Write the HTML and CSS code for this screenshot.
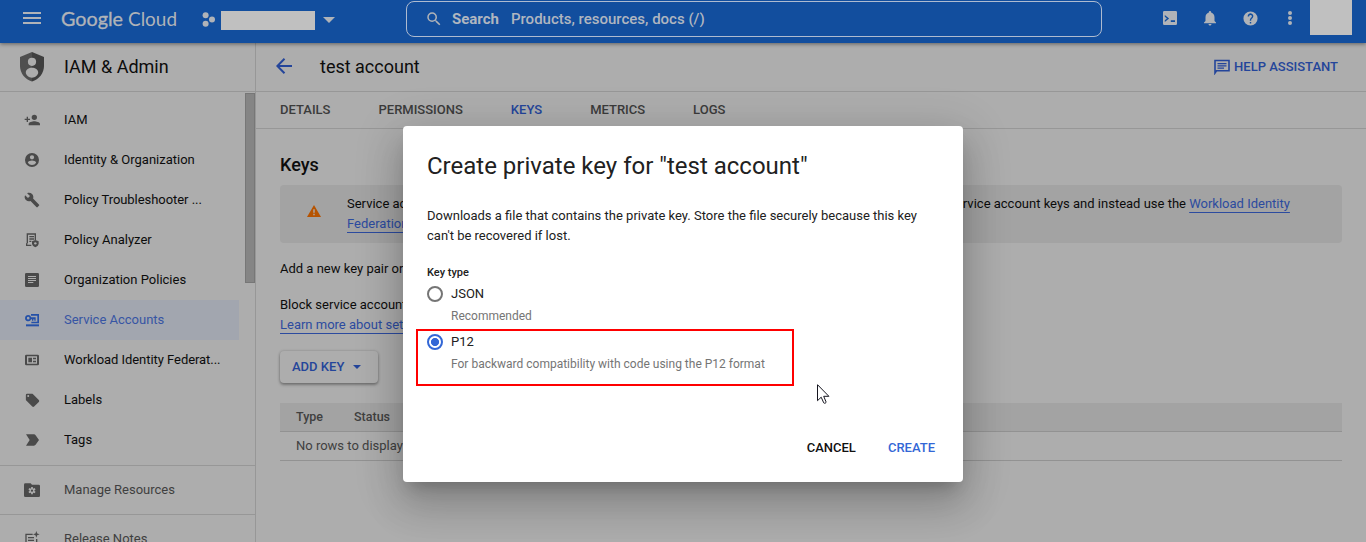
FILE: index.html
```html
<!DOCTYPE html>
<html lang="en">
<head>
<meta charset="utf-8">
<title>IAM &amp; Admin – Service Accounts</title>
<link rel="stylesheet" href="styles.css">
</head>
<body>
<header class="topbar">
  <svg class="menu" width="18" height="12" viewBox="0 0 18 12"><path d="M0 0h18v2H0zM0 5h18v2H0zM0 10h18v2H0z"/></svg>
  <svg class="logo" width="118" height="32" viewBox="0 0 118 32"><text x="0" y="21" textLength="62" lengthAdjust="spacingAndGlyphs" class="logo-google">Google</text><text x="67" y="21" textLength="49" lengthAdjust="spacingAndGlyphs">Cloud</text></svg>
  <svg class="project-icon" width="14" height="16" viewBox="0 0 14 16"><circle cx="3.6" cy="3.3" r="3"/><circle cx="3.6" cy="11.7" r="3"/><circle cx="10" cy="7.4" r="3"/></svg>
  <div class="project-name"></div>
  <svg class="caret" width="12" height="6" viewBox="0 0 12 6"><path d="M0 0h12L6 6z"/></svg>
  <div class="search">
    <svg width="18" height="18" viewBox="0 0 24 24"><path d="M15.5 14h-.79l-.28-.27A6.47 6.47 0 0 0 16 9.500 6.500 6.500 0 1 0 9.500 16c1.610 0 3.090-.59 4.230-1.570l.27.28v.79l5 4.990L20.490 19l-4.990-5zm-6 0C7.010 14 5 11.990 5 9.500S7.010 5 9.500 5 14 7.010 14 9.500 11.990 14 9.500 14z"/></svg>
    <b>Search</b><span>Products, resources, docs (/)</span>
  </div>
  <div class="tools">
    <svg width="14" height="14" viewBox="0 0 14 14"><path fill-rule="evenodd" d="M1.200 0h11.600Q14 0 14 1.200v11.600q0 1.200-1.200 1.200H1.200Q0 14 0 12.800V1.200Q0 0 1.200 0zM1.800 4v1.800L3.900 7.500 1.800 9.300V11l4.300-3.500zM7.800 9.300V11H12V9.300z"/></svg>
    <svg width="18" height="18" viewBox="0 0 24 24"><path d="M12 22c1.100 0 2-.9 2-2h-4c0 1.100.9 2 2 2zm6-6v-5c0-3.070-1.630-5.640-4.500-6.320V4a1.500 1.500 0 0 0-3 0v.68C7.640 5.360 6 7.920 6 11v5l-2 2v1h16v-1l-2-2z"/></svg>
    <svg width="17" height="17" viewBox="0 0 24 24"><path d="M12 2a10 10 0 1 0 0 20 10 10 0 0 0 0-20zm1 17h-2v-2h2v2zm2.070-7.750-.9.920C13.450 12.900 13 13.500 13 15h-2v-.5c0-1.100.45-2.100 1.170-2.830l1.240-1.260A2 2 0 1 0 10 9H8a4 4 0 1 1 7.070 2.250z"/></svg>
    <svg width="6" height="16" viewBox="0 0 6 16"><circle cx="3" cy="3" r="2"/><circle cx="3" cy="8" r="2"/><circle cx="3" cy="13" r="2"/></svg>
  </div>
  <div class="avatar"></div>
</header>

<div class="shell">
  <aside class="sidebar">
    <div class="product">
      <svg width="24" height="30" viewBox="0 0 24 30"><path d="M12 0 0 5v9c0 7 5 13.500 12 15.500z" fill="#4f4f4f"/><path d="M12 0l12 5v9c0 7-5 13.500-12 15.500z" fill="#3f3f3f"/><circle cx="12" cy="9.800" r="4.100" fill="#adadad"/><path d="M5.800 20.500c0-3 3-4.700 6.200-4.700s6.200 1.700 6.200 4.700c0 2.500-3 5.200-6.200 5.200s-6.200-2.700-6.200-5.200z" fill="#adadad"/></svg>
      <span>IAM &amp; Admin</span>
    </div>
    <div class="nav-area">
      <nav class="nav">
        <a class="item"><svg viewBox="0 0 24 24"><path d="M15.500 12a4 4 0 1 0 0-8 4 4 0 0 0 0 8zM6 10V7H4v3H1v2h3v3h2v-3h3v-2H6zm9.500 4C12.500 14 7 15.340 7 18v2h17v-2c0-2.660-5.830-4-8.500-4z"/></svg>IAM</a>
        <a class="item"><svg viewBox="0 0 24 24"><path fill-rule="evenodd" d="M12 1.500a10.500 10.500 0 1 0 0 21 10.500 10.500 0 0 0 0-21zm0 3.200a3.200 3.200 0 1 1 0 6.400 3.200 3.200 0 0 1 0-6.400zm0 14.800a7.600 7.600 0 0 1-6.300-3.400c0-2.100 4.200-3.200 6.300-3.200s6.300 1.100 6.300 3.200a7.600 7.600 0 0 1-6.300 3.400z"/></svg>Identity &amp; Organization</a>
        <a class="item dots"><svg viewBox="0 0 24 24"><path d="m22.700 19-9.100-9.100c.9-2.300.4-5-1.500-6.900-2-2-5-2.400-7.400-1.300L9 6 6 9 1.600 4.700C.4 7.100.9 10.100 2.900 12.100c1.900 1.900 4.600 2.400 6.900 1.500l9.100 9.100c.4.4 1 .4 1.400 0l2.300-2.300c.5-.4.5-1.100.1-1.400z"/></svg>Policy Troubleshooter ...</a>
        <a class="item"><svg viewBox="0 0 24 24"><path fill="none" stroke="#4a4a4a" stroke-width="2" d="M11 20H4v-3M5 17V3h12v9M8 7h7M8 10.500h7M8 14h3"/><path d="m17 12 5 2v3c0 3-2 5-5 6-3-1-5-3-5-6v-3z"/><circle cx="17" cy="17" r="1.800" fill="#adadad"/></svg>Policy Analyzer</a>
        <a class="item"><svg viewBox="0 0 24 24"><path fill-rule="evenodd" d="M3.500 1.500h17q2 0 2 2v17q0 2-2 2h-17q-2 0-2-2v-17q0-2 2-2zM6 6v1.500h12V6zM6 9v1.500h12V9zM6 12v1.500h12V12zm0 3v1.500h8V15z"/></svg>Organization Policies</a>
        <a class="item active"><svg viewBox="0 0 24 24"><path d="M3 18.500h19.500V21.500H3z"/><path fill-rule="evenodd" d="M6.300 4.500a4.700 4.700 0 1 0 4.400 6.400H12V13h2v-2h1.500v2h2V8h-6.800A4.700 4.700 0 0 0 6.300 4.500zm0 2.700a2 2 0 1 1 0 4 2 2 0 0 1 0-4z"/><path d="M10.500 3h12v14H11v-2.500h9V5.500h-9.500z"/></svg>Service Accounts</a>
        <a class="item dots"><svg viewBox="0 0 24 24"><path fill-rule="evenodd" d="M3.500 4h17q2 0 2 2v12q0 2-2 2h-17q-2 0-2-2V6q0-2 2-2zM4.500 6.500v11h15v-11z"/><path d="M6.500 8.500H12v7H6.500zM13.500 8.500H18v2.200h-4.500zM13.500 13.300H18v2.200h-4.500z"/></svg>Workload Identity Federat...</a>
        <a class="item"><svg viewBox="0 0 24 24"><path d="m21.400 11.600-9-9C12 2.200 11.500 2 11 2H4a2 2 0 0 0-2 2v7c0 .6.200 1.100.6 1.400l9 9c.8.800 2 .8 2.800 0l7-7c.8-.8.8-2 0-2.800zM5.500 7a1.500 1.500 0 1 1 0-3 1.500 1.500 0 0 1 0 3z" transform="translate(.8 .5)"/></svg>Labels</a>
        <a class="item"><svg viewBox="0 0 24 24"><path d="M3 3.500h12c1 0 1.800.5 2.400 1.200L22.500 12l-5.100 7.300c-.6.700-1.400 1.200-2.400 1.200H3L8.500 12z"/></svg>Tags</a>
      </nav>
      <div class="thumb"></div>
    </div>
    <a class="item muted"><svg viewBox="0 0 24 24"><path d="M2 2h8l2 2h10q2 0 2 2v14.500q0 2-2 2H2q-2 0-2-2V4q0-2 2-2z"/><g stroke="#adadad" stroke-width="2.600"><path d="M12 7.500v11M7.300 10.200l9.400 5.600M16.700 10.200l-9.400 5.600"/></g><circle cx="12" cy="13" r="3.700" fill="#adadad"/><circle cx="12" cy="13" r="1.700"/></svg>Manage Resources</a>
    <a class="item muted"><svg viewBox="0 0 24 24"><path fill="none" stroke="#4a4a4a" stroke-width="2" d="M13 5H3v17h16V12M6 10h9M6 14h9M6 18h6"/><path d="m18.500 0 1.300 3.700L23.500 5l-3.700 1.300L18.500 10l-1.300-3.700L13.500 5l3.700-1.300z"/></svg>Release Notes</a>
  </aside>

  <main class="main">
    <div class="titlebar">
      <svg class="back" width="16" height="16" viewBox="0 0 16 16"><path d="M8.500.8 1.300 8l7.200 7.200M1.500 8H16" fill="none" stroke="#24459a" stroke-width="2"/></svg>
      <h1>test account</h1>
      <div class="help"><svg width="16" height="16" viewBox="0 0 16 16"><path fill="none" stroke="#24459a" stroke-width="1.600" d="M1 14V1.500h14v10.300H2.500z"/><path d="M3.500 4h9v1.300h-9zM3.500 6.200h9v1.300h-9zM3.500 8.400H10v1.300H3.500z" fill="#24459a"/></svg>HELP ASSISTANT</div>
    </div>
    <div class="tabs"><span>DETAILS</span><span>PERMISSIONS</span><span class="on">KEYS</span><span>METRICS</span><span>LOGS</span></div>
    <section class="content">
      <h2>Keys</h2>
      <div class="notice">
        <svg width="14" height="12" viewBox="0 0 14 12"><path fill="#b65300" d="M7 0l7 12H0z"/><path fill="#adadad" d="M6.300 4.300h1.400v3.400H6.300zM6.300 8.800h1.400v1.400H6.300z"/></svg>
        <p>Service account keys could pose a security risk if compromised. We recommend you avoid downloading service account keys and instead use the <a>Workload Identity</a><br><a>Federation</a>. You can learn more about the best way to authenticate service accounts on Google Cloud <a>here</a>.</p>
      </div>
      <p class="copy">Add a new key pair or upload a public key certificate from an existing key pair.</p>
      <p class="copy">Block service account key creation using organization policies.<br><a>Learn more about setting organization policies</a></p>
      <button class="add">ADD KEY<svg width="8" height="4" viewBox="0 0 8 4"><path d="M0 0h8L4 4z"/></svg></button>
      <div class="table">
        <div class="thead"><span>Type</span><span>Status</span></div>
        <div class="trow">No rows to display</div>
      </div>
    </section>
  </main>
</div>

<div class="dialog">
  <h3>Create private key for "test account"</h3>
  <p class="desc">Downloads a file that contains the private key. Store the file securely because this key<br>can't be recovered if lost.</p>
  <div class="label">Key type</div>
  <div class="option"><i class="radio"></i><div>JSON<small>Recommended</small></div></div>
  <div class="option"><i class="radio checked"></i><div>P12<small>For backward compatibility with code using the P12 format</small></div></div>
  <div class="actions"><span>CANCEL</span><span class="primary">CREATE</span></div>
</div>
<div class="highlight"></div>
<svg class="cursor" width="14" height="21" viewBox="0 0 14 21"><path d="M.5.700v16l3.700-3.500 2.500 5.600c.8 1 2.700.2 2.300-1L6.700 12.300h5.200z" fill="#fff" stroke="#15151f" stroke-width="1"/></svg>
</body>
</html>
```
FILE: styles.css
```css
* { box-sizing: border-box; }
body { margin: 0; width: 1366px; height: 542px; overflow: hidden; background: #adadad; color: #0c0c0c; font: 13px/20px Roboto, sans-serif; }
h1, h2, h3, p { margin: 0; font-weight: 400; }
svg { display: block; flex: none; }

.topbar { position: relative; z-index: 1; display: flex; height: 43px; background: #124e9e; fill: #b0b3b8; color: #b0b6c0; box-shadow: 0 1px 4px rgba(0,0,0,.45); }
.menu { margin: 12px 0 0 23px; }
.logo { margin: 5px 0 0 20px; overflow: visible; font: 20px Lato, sans-serif; }
.logo-google { stroke: #b0b3b8; stroke-width: .35px; }
.project-icon { margin: 12px 0 0 23px; }
.project-name { width: 94px; height: 19px; margin: 11px 0 0 5px; background: #c0c0c0; }
.caret { margin: 17px 0 0 8px; }
.search { display: flex; align-items: center; width: 696px; height: 36px; margin: 1px 0 0 71px; padding: 0 0 1px 18px; border: 1px solid #aebbd0; border-radius: 8px; font-size: 15px; font-weight: 500; }
.search b { margin: 0 12px 0 9px; font-size: 15px; }
.tools { display: flex; align-items: center; height: 36px; margin-left: 61px; }
.tools svg:nth-child(2) { margin-left: 24px; }
.tools svg:nth-child(3) { margin-left: 22.500px; }
.tools svg:nth-child(4) { margin-left: 28.500px; }
.avatar { width: 42px; height: 35px; margin-left: 17px; background: #c0c0c0; }

.shell { display: flex; height: 499px; }
.sidebar { width: 256px; border-right: 1px solid #979797; overflow: hidden; flex: none; }
.product { display: flex; align-items: center; gap: 20px; height: 49px; padding-left: 20px; border-bottom: 1px solid #979797; font-size: 18px; }
.nav-area { display: flex; justify-content: space-between; height: 373px; }
.nav { width: 239px; padding-top: 8px; }
.item { display: flex; align-items: center; gap: 24px; height: 40px; padding-left: 24px; white-space: nowrap; line-height: 18px; fill: #4a4a4a; padding-bottom: 1px; }
.item svg { width: 16px; height: 16px; margin-top: 1px; }
.dots { letter-spacing: -.05px; }
.active { background: #a2a6af; color: #3755a4; fill: #2450a8; }
.thumb { width: 10px; height: 190px; margin-top: 1px; background: #858585; border: 1px solid #777; }
.muted { height: 49px; border-top: 1px solid #979797; color: #3f3f3f; }

.main { flex: 1; }
.titlebar { display: flex; align-items: center; height: 49px; padding: 0 28px 1px 20px; border-bottom: 1px solid #979797; }
.back { margin-bottom: 2px; }
.titlebar h1 { margin-left: 28px; font-size: 18px; line-height: 21px; }
.help { display: flex; align-items: center; gap: 4px; height: 21px; margin-left: auto; padding-top: 1px; color: #24459a; font-weight: 500; }
.tabs { display: flex; gap: 48px; height: 37px; padding: 8px 24px 0; border-bottom: 1px solid #979797; color: #3b3b3b; font-weight: 500; }
.tabs .on { color: #24459a; }
.content { padding: 24px 24px 0; }
h2 { font-size: 18px; line-height: 24px; font-weight: 500; }
.notice { display: flex; align-items: center; gap: 26px; height: 58px; margin-top: 8px; padding-left: 27px; border-radius: 4px; background: #a3a3a3; white-space: nowrap; }
.notice svg { margin-bottom: 6px; }
.main a { color: #2c4b9f; text-decoration: underline; text-underline-offset: 4px; text-decoration-thickness: 1px; }
.copy { margin-top: 16px; }
.add { display: flex; align-items: center; gap: 9px; height: 32px; margin-top: 16px; padding: 0 17px 0 12px; border: 0; border-radius: 4px; background: #adadad; color: #24459a; fill: #24459a; font: 500 13px/18px Roboto, sans-serif; box-shadow: 0 2px 3px rgba(0,0,0,.3), 0 0 3px rgba(0,0,0,.2); }
.table { margin-top: 20px; color: #404040; }
.thead { display: flex; gap: 31px; height: 29px; padding: 4px 16px; background: #a3a3a3; border-bottom: 1px solid #929292; font-size: 12.5px; font-weight: 500; }
.trow { height: 29px; padding: 4px 16px; border-bottom: 1px solid #929292; }

.dialog { position: absolute; z-index: 2; left: 403px; top: 126px; width: 560px; height: 356px; padding: 24px; background: #fff; color: #212121; border-radius: 4px; box-shadow: 0 11px 15px -7px rgba(0,0,0,.2), 0 24px 38px 3px rgba(0,0,0,.14), 0 9px 46px 8px rgba(0,0,0,.12); }
.dialog h3 { font-size: 24px; line-height: 32px; }
.desc { margin-top: 24px; }
.label { margin-top: 18px; font-size: 11px; line-height: 18px; font-weight: 500; }
.option { display: flex; gap: 8px; height: 48px; padding-top: 2px; }
.radio { width: 16px; height: 16px; margin-top: 2px; border: 2px solid #757575; border-radius: 50%; }
.radio.checked { border-color: #3367d6; background: radial-gradient(circle, #3367d6 3.700px, #fff 4.400px); }
.option small { display: block; margin-top: 2px; font-size: 12px; color: #757575; }
.actions { display: flex; justify-content: flex-end; gap: 32px; margin-top: 60px; padding-right: 4px; font-weight: 500; }
.actions span:first-child { color: #111; }
.actions .primary { color: #3367d6; }
.highlight { position: absolute; z-index: 3; left: 416px; top: 329px; width: 378px; height: 57px; border: 2px solid #f00; }
.cursor { position: absolute; z-index: 3; left: 817px; top: 384px; }
```
